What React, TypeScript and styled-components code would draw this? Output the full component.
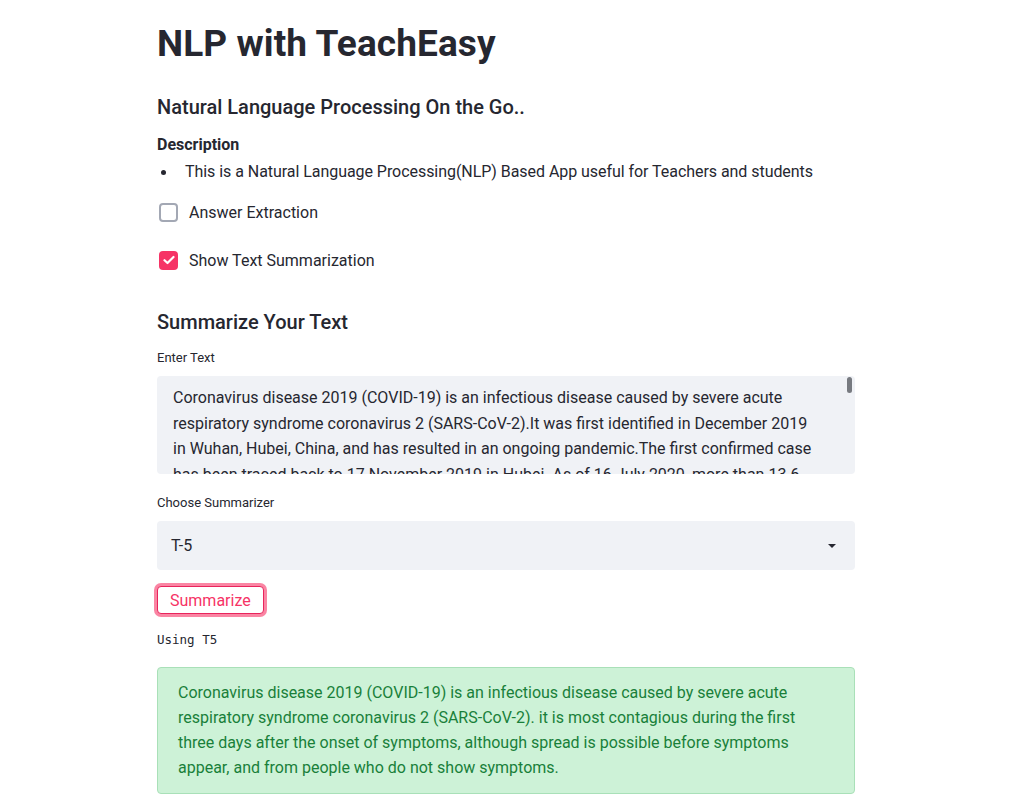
import React, { FunctionComponent } from 'react';
import styled, { createGlobalStyle } from 'styled-components';

const GlobalStyle = createGlobalStyle`
  body {
    margin: 0;
    background: #ffffff;
    color: #262730;
    font-family: Roboto, "Liberation Sans", sans-serif;
  }
`;

const StyledMain = styled.main`
  width: 698px;
  padding-left: 157px;
  padding-bottom: 40px;
`;

const StyledTitle = styled.h1`
  margin: 22px 0 0;
  font-size: 37px;
  line-height: 44px;
  font-weight: 700;
  letter-spacing: 0.1px;
`;

const StyledSubheader = styled.h3<{ $gap: number }>`
  margin: ${(p) => p.$gap}px 0 0;
  font-size: 20px;
  line-height: 28px;
  font-weight: 500;
`;

const StyledBold = styled.div`
  margin-top: 12.5px;
  font-size: 16px;
  line-height: 24px;
  font-weight: 700;
`;

const StyledList = styled.ul`
  margin: 3px 0 0;
  padding: 0;
  list-style: none;
  font-size: 16px;
  line-height: 24px;
`;

const StyledListItem = styled.li`
  display: flex;
  align-items: center;
  letter-spacing: -0.05px;

  &::before {
    content: '';
    flex: none;
    width: 5px;
    height: 5px;
    margin: 0 19px 0 4px;
    border-radius: 50%;
    background: #262730;
  }
`;

const StyledCheckRow = styled.label<{ $gap: number }>`
  display: flex;
  align-items: center;
  gap: 11px;
  margin-top: ${(p) => p.$gap}px;
  height: 24px;
  font-size: 16px;
  padding-left: 2px;
`;

const StyledBox = styled.span<{ $checked?: boolean }>`
  width: 19px;
  height: 19px;
  box-sizing: border-box;
  border-radius: 4px;
  border: ${(p) => (p.$checked ? 'none' : '2px solid #a3a8b4')};
  background: ${(p) => (p.$checked ? '#f63366' : '#ffffff')};
  display: flex;
  align-items: center;
  justify-content: center;
`;

const StyledLabel = styled.div<{ $gap: number }>`
  margin-top: ${(p) => p.$gap}px;
  font-size: 13px;
  line-height: 18px;
`;

const StyledTextArea = styled.div`
  position: relative;
  margin-top: 9px;
  height: 98px;
  box-sizing: border-box;
  padding: 9px 30px 0 16px;
  background: #f0f2f6;
  border-radius: 4px;
  overflow: hidden;
  font-size: 16px;
  line-height: 25.6px;
`;

const StyledLine = styled.div`
  white-space: nowrap;
`;

const StyledScrollThumb = styled.span`
  position: absolute;
  right: 3px;
  top: 1px;
  width: 5px;
  height: 16px;
  border-radius: 3px;
  background: #777a80;
`;

const StyledSelect = styled.div`
  margin-top: 9px;
  height: 49px;
  box-sizing: border-box;
  padding: 0 19px 0 14px;
  background: #f0f2f6;
  border-radius: 4px;
  display: flex;
  align-items: center;
  justify-content: space-between;
  font-size: 16px;
`;

const StyledButton = styled.button`
  display: block;
  margin-top: 16px;
  height: 28px;
  padding: 0 12px;
  background: #ffffff;
  border: 1px solid #e8245c;
  border-radius: 4px;
  box-shadow: 0 0 0 3px rgba(246, 51, 102, 0.6);
  color: #f63366;
  font-family: inherit;
  font-size: 16px;
  cursor: pointer;
`;

const StyledCode = styled.div`
  margin-top: 16px;
  font-family: "DejaVu Sans Mono", "Liberation Mono", monospace;
  font-size: 12.5px;
  line-height: 20px;
`;

const StyledSuccess = styled.div`
  margin-top: 17px;
  padding: 12px 20px 13px;
  background: #cdf2d7;
  border: 1px solid #a9e0b8;
  border-radius: 4px;
  color: #19803a;
  font-size: 16px;
  line-height: 25px;
`;

const inputLines = [
  'Coronavirus disease 2019 (COVID-19) is an infectious disease caused by severe acute',
  'respiratory syndrome coronavirus 2 (SARS-CoV-2).It was first identified in December 2019',
  'in Wuhan, Hubei, China, and has resulted in an ongoing pandemic.The first confirmed case',
  'has been traced back to 17 November 2019 in Hubei. As of 16 July 2020, more than 13.6',
];

const summaryLines = [
  'Coronavirus disease 2019 (COVID-19) is an infectious disease caused by severe acute',
  'respiratory syndrome coronavirus 2 (SARS-CoV-2). it is most contagious during the first',
  'three days after the onset of symptoms, although spread is possible before symptoms',
  'appear, and from people who do not show symptoms.',
];

const Check: FunctionComponent = () => (
  <svg width="12" height="10" viewBox="0 0 12 10">
    <path d="M1.5 5.2 L4.5 8 L10.5 2" fill="none" stroke="#ffffff" strokeWidth="2.2" strokeLinecap="round" strokeLinejoin="round" />
  </svg>
);

const Caret: FunctionComponent = () => (
  <svg width="8" height="4" viewBox="0 0 8 4">
    <path d="M0 0 H8 L4 4 Z" fill="#262730" />
  </svg>
);

const App: FunctionComponent = () => (
  <>
    <GlobalStyle />
    <StyledMain>
      <StyledTitle>NLP with TeachEasy</StyledTitle>
      <StyledSubheader $gap={26.5}>Natural Language Processing On the Go..</StyledSubheader>
      <StyledBold>Description</StyledBold>
      <StyledList>
        <StyledListItem>This is a Natural Language Processing(NLP) Based App useful for Teachers and students</StyledListItem>
      </StyledList>
      <StyledCheckRow $gap={16.5}>
        <StyledBox />
        Answer Extraction
      </StyledCheckRow>
      <StyledCheckRow $gap={23.5}>
        <StyledBox $checked>
          <Check />
        </StyledBox>
        Show Text Summarization
      </StyledCheckRow>
      <StyledSubheader $gap={36}>Summarize Your Text</StyledSubheader>
      <StyledLabel $gap={13}>Enter Text</StyledLabel>
      <StyledTextArea>
        {inputLines.map((line) => (
          <StyledLine key={line}>{line}</StyledLine>
        ))}
        <StyledScrollThumb />
      </StyledTextArea>
      <StyledLabel $gap={20}>Choose Summarizer</StyledLabel>
      <StyledSelect>
        <span>T-5</span>
        <Caret />
      </StyledSelect>
      <StyledButton>Summarize</StyledButton>
      <StyledCode>Using T5</StyledCode>
      <StyledSuccess>
        {summaryLines.map((line) => (
          <StyledLine key={line}>{line}</StyledLine>
        ))}
      </StyledSuccess>
    </StyledMain>
  </>
);

export default App;
